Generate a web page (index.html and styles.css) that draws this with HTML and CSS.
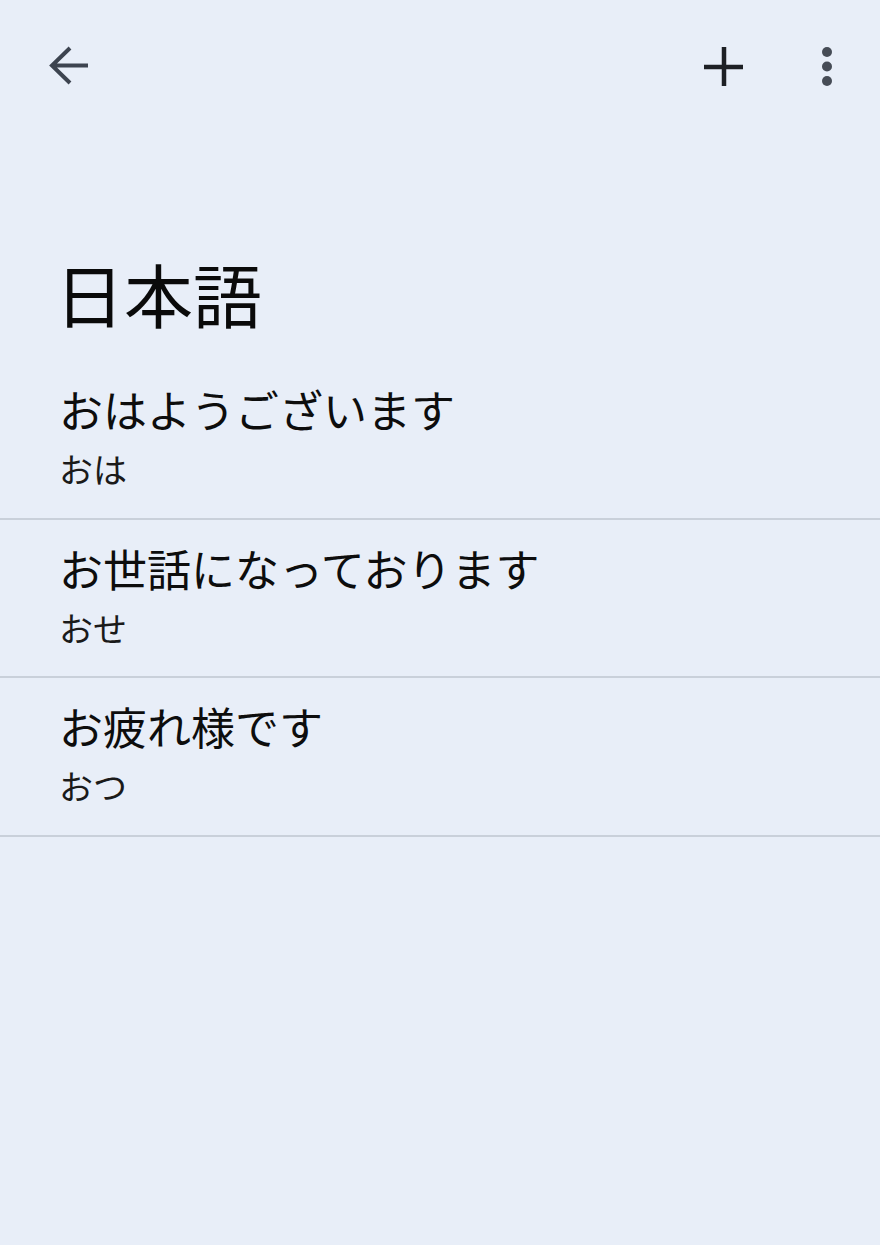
FILE: index.html
```html
<!DOCTYPE html>
<html lang="ja">
<head>
<meta charset="utf-8">
<title>日本語</title>
<link rel="stylesheet" href="styles.css">
</head>
<body>
<div class="screen">
  <header class="toolbar">
    <button class="icon-btn back" aria-label="戻る">
      <svg width="48" height="48" viewBox="0 0 48 48"><path d="M44 22.5H9M26 5L8 22.5L26 40" fill="none" stroke="#3d4450" stroke-width="4"/></svg>
    </button>
    <div class="actions">
      <button class="icon-btn" aria-label="追加">
        <svg width="48" height="48" viewBox="0 0 48 48"><path d="M24 4V43M4 24H43" fill="none" stroke="#1d2025" stroke-width="4.5"/></svg>
      </button>
      <button class="icon-btn" aria-label="その他">
        <svg width="48" height="48" viewBox="0 0 48 48"><circle cx="25" cy="9" r="5" fill="#464c56"/><circle cx="25" cy="23.5" r="5" fill="#464c56"/><circle cx="25" cy="38" r="5" fill="#464c56"/></svg>
      </button>
    </div>
  </header>
  <h1 class="title">日本語</h1>
  <ul class="list">
    <li class="item"><div class="main">おはようございます</div><div class="sub">おは</div></li>
    <li class="item"><div class="main">お世話になっております</div><div class="sub">おせ</div></li>
    <li class="item"><div class="main">お疲れ様です</div><div class="sub">おつ</div></li>
  </ul>
</div>
</body>
</html>
```
FILE: styles.css
```css
html, body {
  margin: 0;
  padding: 0;
  background: #e8eef8;
}
body {
  font-family: "Noto Sans CJK JP", "Noto Sans", sans-serif;
  color: #111;
}
.screen {
  width: 880px;
  min-height: 1245px;
  background: #e8eef8;
}
.toolbar {
  height: 134px;
  display: flex;
  align-items: center;
  justify-content: space-between;
  padding: 0 30px 0 44px;
}
.actions {
  display: flex;
  align-items: center;
  gap: 54px;
}
.icon-btn {
  width: 48px;
  height: 48px;
  padding: 0;
  border: 0;
  background: none;
  display: flex;
}
.title {
  margin: 114px 0 0 0;
  padding-left: 55px;
  font-size: 69px;
  font-weight: 400;
  line-height: 90px;
  color: #0a0a0a;
}
.list {
  list-style: none;
  margin: 23px 0 0 0;
  padding: 0;
}
.item {
  padding: 18px 0 24.5px 59px;
  border-bottom: 2px solid #c9d0da;
}
.main {
  font-size: 44px;
  line-height: 60px;
  color: #0d0d0d;
}
.sub {
  margin-top: 6px;
  font-size: 34px;
  line-height: 48px;
  color: #1a1a1a;
}
```
